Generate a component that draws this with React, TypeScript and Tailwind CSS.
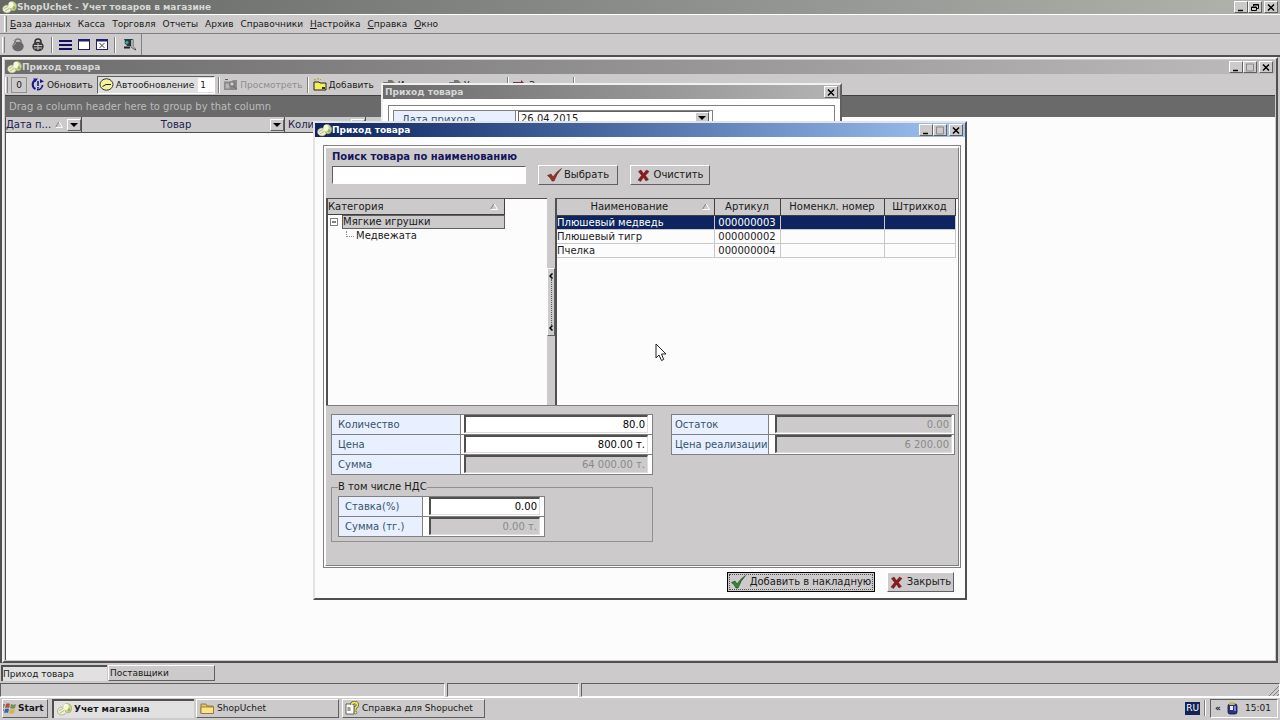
import React from 'react';
import clsx from 'clsx';

const raised = 'border border-t-white border-l-white border-r-[#606060] border-b-[#606060]';
const sunken = 'border border-t-[#606060] border-l-[#606060] border-r-white border-b-white';

/* ---------- icons ---------- */

const CoinsIcon = () => (
  <svg width="15" height="13" viewBox="0 0 15 13" className="shrink-0">
    <ellipse cx="5" cy="8" rx="4.500" ry="4" fill="#eef0d0" stroke="#8c9470" strokeWidth=".6" />
    <path d="M2 7.500l4-2M3 10l4-2.500" stroke="#a5b070" strokeWidth=".8" />
    <path d="M7 1.500q4-2.500 6.500.5t0 7q-3 2-5-.5T7 1.500z" fill="#c9d690" stroke="#93a05e" strokeWidth=".6" />
    <ellipse cx="9" cy="4" rx="2.600" ry="3.200" fill="#f8f8dc" />
    <path d="M11 5l2.500 1-1 2.500-2-.5z" fill="#9db05c" />
  </svg>
);

const LockIcon = ({ locked }: { locked?: boolean }) => (
  <svg width="14" height="14" viewBox="0 0 14 14">
    <path d="M4 6V4a3 3 0 0 1 6 0v2" fill="none" stroke={locked ? '#303030' : '#7a7a7a'} strokeWidth="1.600" />
    <ellipse cx="7" cy="8.500" rx="5.700" ry="4.800" fill={locked ? '#3c3c3c' : '#686868'} />
    {locked ? (
      <path d="M3 7.500h8M3 10h8M7 5v7" stroke="#c4c4c4" strokeWidth="1" />
    ) : (
      <path d="M2 7.500l3-2.500M2 3l2-1" stroke="#a8a8a8" />
    )}
  </svg>
);

const ListIcon = () => (
  <svg width="13" height="12" viewBox="0 0 13 12">
    <path d="M0 2h13M0 6h13M0 10h13" stroke="#10105e" strokeWidth="2" />
  </svg>
);

const WindowIcon = ({ crossed }: { crossed?: boolean }) => (
  <svg width="12" height="12" viewBox="0 0 12 12">
    <rect x=".5" y=".5" width="11" height="10" fill="#fff" stroke="#20206a" />
    <path d="M0 1.500h12" stroke="#20206a" strokeWidth="2" />
    {crossed && <path d="M3.500 4l5 5M8.500 4l-5 5" stroke="#444" />}
  </svg>
);

const DoorIcon = () => (
  <svg width="15" height="13" viewBox="0 0 15 13">
    <path d="M2 1h8v7H5z" fill="#1d3f3f" />
    <path d="M9 1.500h2v7l2.500 2.500v1L9 9z" fill="#eef4f4" stroke="#222" strokeWidth=".7" />
    <circle cx="5" cy="4.500" r="2" fill="#4fa39c" stroke="#123" strokeWidth=".6" />
    <path d="M2 9.500h6" stroke="#222" strokeWidth="2" />
  </svg>
);

const RefreshIcon = () => (
  <svg width="15" height="13" viewBox="0 0 15 13" className="shrink-0">
    <path d="M5.500 2a5 5 0 0 0 0 9" fill="none" stroke="#18188c" strokeWidth="2" />
    <path d="M7 11.700a5.200 5.200 0 0 0 5.500-4.700" fill="none" stroke="#18188c" strokeWidth="1.800" />
    <path d="M3 .5h5L5.500 4zM10 1l4 2.500-4 1.500z" fill="#18188c" />
    <path d="M8 3v5M8 9v1.500" stroke="#18188c" strokeWidth="1.600" />
  </svg>
);

const ClockIcon = () => (
  <svg width="15" height="13" viewBox="0 0 15 13">
    <ellipse cx="7.500" cy="6.500" rx="6.500" ry="5.700" fill="#f4f29a" stroke="#333" />
    <path d="M3.500 8.500L7 6.500h5" fill="none" stroke="#222" />
  </svg>
);

const ViewIcon = () => (
  <svg width="15" height="13" viewBox="0 0 15 13">
    <path d="M1 3.500h8l1-1.500h4v10H1z" fill="#8a8a8a" />
    <path d="M2.500 5.500h4v5h-4z" fill="#b4b4b4" />
    <circle cx="9" cy="6" r="2.300" fill="#ccc" stroke="#666" />
    <path d="M10.500 8l3 3M2 1.500h3" stroke="#606060" />
  </svg>
);

const AddFolderIcon = () => (
  <svg width="14" height="13" viewBox="0 0 14 13">
    <path d="M1 4h5l1 1h6v7H1z" fill="#f2ee5c" stroke="#222" />
    <path d="M1 1.500l2 .5M5 0v2M8 1l-1 1" stroke="#b5a800" />
    <path d="M9 9h3v2H9z" fill="#333" />
  </svg>
);

const EditIcon = () => (
  <svg width="14" height="12" viewBox="0 0 14 12">
    <path d="M1 3h5V1h4l3 3-5 7H3z" fill="#777" />
  </svg>
);

const ExitIcon = () => (
  <svg width="14" height="12" viewBox="0 0 14 12">
    <path d="M0 3h8V1l4 4-4 4V6H0z" fill="#6d3448" />
  </svg>
);

const CheckIcon = ({ color }: { color: string }) => (
  <svg width="15" height="14" viewBox="0 0 15 14" className="shrink-0">
    <path d="M.5 7.500L4 6l2 3Q9 4 14.500.5 9.500 6 7 13H5Q3.500 9.500.5 7.500z" fill={color} stroke="#222" strokeWidth=".5" />
  </svg>
);

const CrossIcon = () => (
  <svg width="13" height="13" viewBox="0 0 13 13" className="shrink-0">
    <path d="M1.500 2.500L4 1l2.500 3.500L9.500 1 12 2.500 8.500 6.500l3 4L9 12 6.500 8.500 3.500 12.500 1 11l3.500-4.500z" fill="#8c1c1c" stroke="#4c1010" strokeWidth=".4" />
  </svg>
);

const SortIcon = () => (
  <svg width="8" height="7" viewBox="0 0 8 7" className="shrink-0">
    <path d="M.5 6.500L4 .5" stroke="#808080" />
    <path d="M4 .5l3.500 6H.5" fill="none" stroke="#fff" />
  </svg>
);

const StartIcon = () => (
  <svg width="14" height="13" viewBox="0 0 14 13" className="shrink-0">
    <path d="M3 2q2-1.500 4 0L6 6Q4 5 2 6z" fill="#b4533a" />
    <path d="M8 2q2 1.500 5 0l-1 4q-2 1.500-5 0z" fill="#6f9348" />
    <path d="M2 7q2-1 4 0l-1 4q-2-1-4 0z" fill="#3f62a8" />
    <path d="M7 7q2 1.500 5 0l-1 4q-2 1.500-5 0z" fill="#d6b548" />
    <path d="M0 3h2M0 5h1M0 8h1" stroke="#444" />
  </svg>
);

const FolderIcon = () => (
  <svg width="15" height="13" viewBox="0 0 15 13" className="shrink-0">
    <path d="M1 2h5l1 2h6v7H1z" fill="#e9c95c" stroke="#866a1c" strokeWidth=".8" />
    <path d="M1 5h12.500v6.500H1z" fill="#f8e48f" stroke="#866a1c" strokeWidth=".8" />
  </svg>
);

const HelpIcon = () => (
  <svg width="15" height="14" viewBox="0 0 15 14" className="shrink-0">
    <path d="M1 3h8v10H1z" fill="#fff" stroke="#444" strokeWidth=".8" />
    <path d="M2.500 7h3M2.500 9h3" stroke="#333" />
    <path d="M6.500 4q0-2.500 3-2.500t3 2.500q0 1.500-2 2.500v2" fill="none" stroke="#444" strokeWidth="3" />
    <path d="M6.500 4q0-2.500 3-2.500t3 2.500q0 1.500-2 2.500v2" fill="none" stroke="#f0e648" strokeWidth="1.800" />
    <circle cx="10.500" cy="11.500" r="1.400" fill="#f0e648" stroke="#444" strokeWidth=".6" />
  </svg>
);

const TrayIcon = () => (
  <svg width="11" height="14" viewBox="0 0 11 14">
    <rect x="1" y="3" width="9" height="10" rx="2" fill="#2c3384" stroke="#14143c" strokeWidth=".8" />
    <path d="M3 1h4l1 3H2z" fill="#c8b45c" />
    <rect x="3" y="5" width="3" height="4" fill="#e8e8ff" />
    <path d="M7 5h2v5H7z" fill="#7a84d8" />
  </svg>
);

const PointerIcon = () => (
  <svg width="13" height="20" viewBox="0 0 13 20" className="absolute left-[655px] top-[343px]">
    <path d="M1 1v14l3-3 2.500 5.500 2.200-1L6.500 11h4.500z" fill="#fff" stroke="#222" />
  </svg>
);

/* ---------- window parts ---------- */

type Glyph = 'min' | 'max' | 'restore' | 'close';

const glyphs: Record<Glyph, React.ReactNode> = {
  min: <path d="M2 7.500h5" stroke="#000" strokeWidth="1.500" />,
  max: <path d="M1.500 1h7v7h-7z" fill="none" stroke="#8a8a8a" />,
  restore: <path d="M3.500 3V1.500h5v4H7M1.500 4h5v3.500h-5zM3 2h6M1 4.500h6" fill="none" stroke="#000" />,
  close: <path d="M2 1.500l6 6M8 1.500l-6 6" stroke="#000" strokeWidth="1.500" />,
};

const CaptionButton = ({ glyph }: { glyph: Glyph }) => (
  <button aria-label={glyph} className={clsx('flex h-3 w-[14px] items-center justify-center bg-[#cccacb]', raised)}>
    <svg width="10" height="9" viewBox="0 0 10 9">{glyphs[glyph]}</svg>
  </button>
);

interface TitleBarProps {
  title: string;
  className: string;
  buttons: Glyph[];
  icon?: boolean;
}

const TitleBar = ({ title, className, buttons, icon = true }: TitleBarProps) => (
  <div className={clsx('flex h-[14px] shrink-0 items-center px-0.5 text-[9px] font-bold', className)}>
    {icon && <CoinsIcon />}
    <span className="grow">{title}</span>
    {buttons.map((b) => (
      <span key={b} className={clsx('flex', b === 'close' && buttons.length > 1 && 'ml-0.5')}>
        <CaptionButton glyph={b} />
      </span>
    ))}
  </div>
);

const Grip = () => <span className="h-4 w-[3px] shrink-0 border-l border-r border-l-white border-r-[#808080]" />;
const Separator = () => <span className="h-4 w-0.5 shrink-0 border-l border-r border-l-[#808080] border-r-white" />;

const DropArrow = () => (
  <span className={clsx('flex h-3 w-[14px] shrink-0 items-center justify-center bg-[#cccacb]', raised)}>
    <svg width="8" height="4" viewBox="0 0 8 4"><path d="M0 0h8L4 4z" fill="#000" /></svg>
  </span>
);

const menu = [
  ['Б', 'аза данных'],
  ['', 'Касса'],
  ['', 'Торговля'],
  ['', 'Отчеты'],
  ['', 'Архив'],
  ['', 'Справочники'],
  ['Н', 'астройка'],
  ['С', 'правка'],
  ['О', 'кно'],
];

const goods = [
  { name: 'Плюшевый медведь', code: '000000003' },
  { name: 'Плюшевый тигр', code: '000000002' },
  { name: 'Пчелка', code: '000000004' },
];

/* ---------- form ---------- */

interface FieldProps {
  id: string;
  label: string;
  value: string;
  disabled?: boolean;
  columns: string;
  labelPad?: string;
  inputPad?: string;
}

const Field = ({ id, label, value, disabled, columns, labelPad = 'pl-1.5', inputPad = 'pl-1.5 pr-1' }: FieldProps) => (
  <div className={clsx('grid h-5 border-b border-[#808080]', columns)}>
    <label htmlFor={id} className={clsx('flex items-center whitespace-nowrap border-r border-[#808080] bg-[#e8effe] text-[#35546c]', labelPad)}>
      {label}
    </label>
    <div className={clsx('flex bg-white', inputPad)}>
      <input
        id={id}
        defaultValue={value}
        disabled={disabled}
        className={clsx(
          'h-[18px] w-full min-w-0 border-t-2 border-l-2 border-r border-b border-t-[#505050] border-l-[#505050] border-r-[#dddddd] border-b-[#dddddd] pr-0.5 text-right outline-none',
          disabled ? 'bg-[#cccacb] text-[#8a8a8a]' : 'bg-white text-black'
        )}
      />
    </div>
  </div>
);

const ReceiptWindow = () => (
  <section className="absolute left-[381px] top-[83px] h-[300px] w-[461px] border-2 border-t-[#f0f0f0] border-l-[#f0f0f0] border-r-[#606060] border-b-[#606060] bg-white">
    <TitleBar title="Приход товара" icon={false} buttons={['close']} className="bg-linear-to-r from-[#6c6c6c] to-[#b4b4b4] text-[#d8d8d8]" />
    <div className="mx-[5px] mt-[6px] h-[260px] border border-[#808080] p-1">
      <div className="grid h-6 w-[320px] grid-cols-[122px_1fr] border border-[#808080]">
        <label htmlFor="date" className="border-r border-[#808080] bg-[#e8effe] pt-0.5 pl-2 text-[#35546c]">Дата прихода</label>
        <div className="flex items-start px-0.5">
          <div className={clsx('flex h-5 w-full items-start', sunken)}>
            <input id="date" defaultValue="26.04.2015" className="h-[14px] min-w-0 grow px-0.5 outline-none" />
            <DropArrow />
          </div>
        </div>
      </div>
    </div>
  </section>
);

const PickDialog = () => (
  <section className="absolute left-[313px] top-[121px] w-[654px] border-2 border-t-[#e4e4e4] border-l-[#e4e4e4] border-r-[#505050] border-b-[#505050] bg-[#fdfcfd]">
    <TitleBar title="Приход товара" buttons={['min', 'max', 'close']} className="bg-linear-to-r from-[#0e2460] to-[#a0c4f4] text-white" />
    <div className="mt-2 mr-1 ml-2 border border-[#808080] p-px">
      <div className="border border-t-white border-l-white border-r-[#808080] border-b-[#808080] bg-[#cccacb]">
        <div className="h-[50px] px-1.5 pt-px">
          <label htmlFor="search" className="block h-4 leading-4 font-bold text-[#16165c]">Поиск товара по наименованию</label>
          <div className="flex items-center">
            <input id="search" className={clsx('h-[18px] w-[194px] bg-white px-1 outline-none', sunken)} />
            <button className={clsx('ml-3 flex h-5 w-20 items-center justify-center gap-0.5', raised)}>
              <CheckIcon color="#a82c1c" /> Выбрать
            </button>
            <button className={clsx('ml-3 flex h-5 w-20 items-center justify-center gap-1', raised)}>
              <CrossIcon /> Очистить
            </button>
          </div>
        </div>

        <div className="flex h-[207px]">
          <div className="w-[221px] shrink-0 border-t border-l-2 border-t-[#505050] border-l-[#505050] bg-[#fdfcfd]">
            <div className="flex h-4 w-[177px] items-center justify-between border-r border-b border-[#404040] bg-[#cccacb] pr-1.5">
              Категория <SortIcon />
            </div>
            <div className="flex h-[14px] items-center">
              <svg width="14" height="14" viewBox="0 0 14 14" className="shrink-0">
                <rect x="2.500" y="3.500" width="7" height="7" fill="#fff" stroke="#808080" />
                <path d="M4 7h4" stroke="#000" />
              </svg>
              <span className="flex h-[14px] w-[163px] items-center border border-[#606060] bg-[#cccacb]">Мягкие игрушки</span>
            </div>
            <div className="flex h-[14px] items-center pl-[18px]">
              <span className="mr-0.5 mb-1 h-1.5 w-2 border-b border-l border-dotted border-[#909090]" />
              Медвежата
            </div>
          </div>
          <div className="flex w-2 shrink-0 flex-col items-center justify-center">
            <button aria-label="Свернуть" className={clsx('flex h-[68px] w-2 flex-col items-center justify-between py-1', raised)}>
              <svg width="4" height="6" viewBox="0 0 4 6"><path d="M3.500.5L1 3l2.500 2.500" fill="none" stroke="#000" strokeWidth="1.500" /></svg>
              <span className="grow border-l border-dotted border-[#606060]" />
              <svg width="4" height="6" viewBox="0 0 4 6"><path d="M3.500.5L1 3l2.500 2.500" fill="none" stroke="#000" strokeWidth="1.500" /></svg>
            </button>
          </div>
          <div className="min-w-0 grow border-t border-l-2 border-t-[#505050] border-l-[#505050] bg-[#fdfcfd]">
            <table className="w-[398px] table-fixed border-collapse leading-[13px]">
              <colgroup>
                <col className="w-[157px]" />
                <col className="w-[66px]" />
                <col className="w-[104px]" />
                <col className="w-[71px]" />
              </colgroup>
              <thead>
                <tr className="h-4 bg-[#cccacb]">
                  {['Наименование', 'Артикул', 'Номенкл. номер', 'Штрихкод'].map((h, i) => (
                    <th key={h} className="border-r border-b border-[#404040] p-0 font-normal">
                      <span className={clsx('flex items-center', i === 0 && 'pr-1')}>
                        <span className="grow text-center">{h}</span>
                        {i === 0 && <SortIcon />}
                      </span>
                    </th>
                  ))}
                </tr>
              </thead>
              <tbody>
                {goods.map((g, i) => (
                  <tr key={g.code} className={clsx(i === 0 && 'bg-[#0e2460] text-white')}>
                    <td className="border-r border-b border-[#c8c8c8] p-0">{g.name}</td>
                    <td className="border-r border-b border-[#c8c8c8] p-0 text-center">{g.code}</td>
                    <td className="border-r border-b border-[#c8c8c8] p-0" />
                    <td className="border-r border-b border-[#c8c8c8] p-0" />
                  </tr>
                ))}
              </tbody>
            </table>
          </div>
        </div>

        <div className="flex h-40 items-start justify-between border-t border-[#808080] pt-2 pr-[3px] pl-[5px]">
          <div className="w-[322px]">
            <div className="border border-b-0 border-[#808080]">
              <Field id="qty" label="Количество" value="80.0" columns="grid-cols-[129px_1fr]" inputPad="pl-[3px] pr-1" />
              <Field id="price" label="Цена" value="800.00 т." columns="grid-cols-[129px_1fr]" inputPad="pl-[3px] pr-1" />
              <Field id="sum" label="Сумма" value="64 000.00 т." disabled columns="grid-cols-[129px_1fr]" inputPad="pl-[3px] pr-1" />
            </div>
            <fieldset className="mt-1 border border-[#909090] pb-1 pl-1.5">
              <legend className="h-4 leading-4">В том числе НДС</legend>
              <div className="mt-px w-[207px] border border-b-0 border-[#808080]">
                <Field id="rate" label="Ставка(%)" value="0.00" columns="grid-cols-[84px_1fr]" />
                <Field id="vat" label="Сумма (тг.)" value="0.00 т." disabled columns="grid-cols-[84px_1fr]" />
              </div>
            </fieldset>
          </div>
          <div className="w-[284px] border border-b-0 border-[#808080]">
            <Field id="rest" label="Остаток" value="0.00" disabled labelPad="pl-[3px]" inputPad="pl-1.5 pr-0.5" columns="grid-cols-[97px_1fr]" />
            <Field id="retail" label="Цена реализации" value="6 200.00" disabled labelPad="pl-[3px]" inputPad="pl-1.5 pr-0.5" columns="grid-cols-[97px_1fr]" />
          </div>
        </div>
      </div>
    </div>
    <div className="flex justify-end gap-3 px-[11px] pt-1 pb-1.5">
      <button className="h-5 w-[148px] border border-black bg-[#cccacb] p-px">
        <span className="flex h-full items-center justify-center gap-1 border border-dotted border-[#505050]">
          <CheckIcon color="#2f8a2f" /> Добавить в накладную
        </span>
      </button>
      <button className={clsx('flex h-5 w-[67px] items-center justify-center gap-1 bg-[#cccacb]', raised)}>
        <CrossIcon /> Закрыть
      </button>
    </div>
  </section>
);

const ToolButton = ({ icon, children, disabled }: { icon: React.ReactNode; children: React.ReactNode; disabled?: boolean }) => (
  <button disabled={disabled} className={clsx('flex items-center gap-0.5', disabled && 'text-[#8e8e8e]')}>
    {icon} {children}
  </button>
);

const JournalWindow = () => (
  <section className="flex grow flex-col border-2 border-t-[#f0f0f0] border-l-[#f0f0f0] border-r-[#505050] border-b-[#505050] bg-[#cccacb] p-px">
    <TitleBar title="Приход товара" buttons={['min', 'max', 'close']} className="bg-linear-to-r from-[#6c6c6c] to-[#bcbcbc] text-[#d8d8d8]" />
    <div className="flex h-[21px] shrink-0 items-center text-[9px]">
      <Grip />
      <span className="mr-[3px] ml-[3px] flex h-4 w-4 items-center justify-center border border-[#909090]">0</span>
      <ToolButton icon={<RefreshIcon />}>Обновить</ToolButton>
      <span className={clsx('ml-1 flex h-[18px] items-center gap-0.5 bg-[#e0dfe0] pl-px', sunken)}>
        <ClockIcon /> <label htmlFor="auto">Автообновление</label>
        <input id="auto" defaultValue="1" className="ml-0.5 h-3.5 w-4 bg-white px-0.5 outline-none" />
      </span>
      <span className="mx-[3px] flex"><Separator /></span>
      <ToolButton icon={<ViewIcon />} disabled>Просмотреть</ToolButton>
      <span className="mx-1 flex"><Separator /></span>
      <ToolButton icon={<AddFolderIcon />}>Добавить</ToolButton>
      <span className="ml-2 flex gap-1">
        <ToolButton icon={<EditIcon />}>Изменить</ToolButton>
        <ToolButton icon={<EditIcon />}>Удалить</ToolButton>
        <Separator />
        <ToolButton icon={<ExitIcon />}>Закрыть</ToolButton>
        <Separator />
      </span>
    </div>
    <div className="flex h-[22px] shrink-0 items-center border-t border-[#404040] bg-[#6a6a6a] px-1 text-[#bcbcbc]">
      Drag a column header here to group by that column
    </div>
    <div className="grow border-l border-[#505050] bg-[#fdfcfd]">
      <div className="flex h-4 text-[#20204e]">
        <div className="flex w-[76px] items-center justify-between border-r border-b border-[#505050] bg-[#cccacb]">
          Дата п... <SortIcon /> <DropArrow />
        </div>
        <div className="flex w-[203px] items-center border-r border-b border-[#505050] bg-[#cccacb]">
          <span className="grow text-center">Товар</span>
          <DropArrow />
        </div>
        <div className="flex w-[81px] items-center justify-between overflow-hidden border-r border-b border-[#505050] bg-[#cccacb] pl-[3px]">
          Колич... <DropArrow />
        </div>
        <div className="w-20 bg-[#cccacb]" />
      </div>
    </div>
  </section>
);

export default function App() {
  return (
    <div className="relative flex h-screen flex-col overflow-hidden bg-[#cccacb] font-['DejaVu_Sans','Noto_Sans',sans-serif] text-[10px] leading-[14px] text-[#1a1a1a]">
      <TitleBar
        title="ShopUchet - Учет товаров в магазине"
        buttons={['min', 'restore', 'close']}
        className="bg-linear-to-r from-[#666866] to-[#b0b4ac] text-[#d8d8d8]"
      />
      <nav className="flex h-5 shrink-0 items-center gap-[7px] border-t border-b border-t-white border-b-[#808080] pl-1 text-[9px]">
        <Grip />
        {menu.map(([key, rest], i) => (
          <button key={rest} className={i === 0 ? '-ml-1' : ''}>
            <span className="underline">{key}</span>
            {rest}
          </button>
        ))}
      </nav>
      <div className="flex h-[21px] w-[142px] shrink-0 items-center gap-1.5 border-r border-r-[#808080] pl-0.5">
        <Grip />
        <button aria-label="Открыть"><LockIcon /></button>
        <button aria-label="Заблокировать"><LockIcon locked /></button>
        <Separator />
        <button aria-label="Список"><ListIcon /></button>
        <button aria-label="Окно"><WindowIcon /></button>
        <button aria-label="Закрыть окно"><WindowIcon crossed /></button>
        <Separator />
        <button aria-label="Выход"><DoorIcon /></button>
      </div>

      <main className="flex grow border-t-2 border-l-2 border-t-[#505050] border-l-[#505050] pr-0.5">
        <JournalWindow />
      </main>

      <div className="flex h-5 shrink-0 items-center gap-px px-px text-[9px]">
        <button className="h-4 w-[106px] border-t-2 border-l-2 border-[#505050] bg-[#e2e1e2] text-left leading-3">Приход товара</button>
        <button className={clsx('h-4 w-[107px] pl-px text-left leading-3', raised)}>Поставщики</button>
      </div>
      <footer className="flex h-[14px] shrink-0 gap-0.5">
        <span className={clsx('w-[445px]', sunken)} />
        <span className={clsx('w-[132px]', sunken)} />
        <span className={clsx('flex grow items-end justify-end', sunken)}>
          <svg width="10" height="10" viewBox="0 0 10 10"><path d="M0 10L10 0M4 10l6-6M8 10l2-2" stroke="#808080" /></svg>
        </span>
      </footer>

      <div className="flex h-[23px] shrink-0 items-center border-t border-white px-0.5 pb-0.5 text-[9px] whitespace-nowrap">
        <button className={clsx('mr-1 flex h-[19px] w-[46px] items-center gap-px font-bold', raised)}>
          <StartIcon /> Start
        </button>
        <button className="mr-0.5 flex h-[19px] w-[142px] items-center gap-0.5 border-t-2 border-l-2 border-[#505050] bg-[#e2e1e2] pl-[3px] font-bold">
          <CoinsIcon /> Учет магазина
        </button>
        <button className={clsx('mr-[3px] flex h-[19px] w-[143px] items-center gap-0.5 pl-[3px]', raised)}>
          <FolderIcon /> ShopUchet
        </button>
        <button className={clsx('flex h-[19px] w-[143px] items-center gap-0.5 pl-0.5', raised)}>
          <HelpIcon /> Справка для Shopuchet
        </button>
        <span className="mr-1 ml-auto h-[13px] bg-[#102458] px-px leading-[13px] text-white">RU</span>
        <Separator />
        <div className={clsx('ml-1 flex h-[19px] w-[68px] items-center justify-between pr-1.5 pl-1', sunken)}>
          <span className="font-bold">«</span>
          <TrayIcon />
          <span>15:01</span>
        </div>
      </div>

      <ReceiptWindow />
      <PickDialog />
      <PointerIcon />
    </div>
  );
}
